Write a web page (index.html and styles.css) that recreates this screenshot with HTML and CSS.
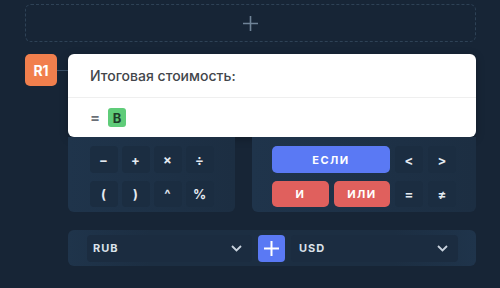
FILE: index.html
```html
<!DOCTYPE html>
<html lang="ru">
<head>
  <meta charset="UTF-8">
  <meta name="viewport" content="width=device-width, initial-scale=1.0">
  <link rel="stylesheet" href="styles.css">
  <title>Формула</title>
</head>
<body>

<div class="add-box">
  <svg width="17" height="17" viewBox="0 0 17 17"><path d="M8.5 1v15M1 8.5h15" stroke="#6f8397" stroke-width="1.6" fill="none"/></svg>
</div>

<div class="formula-row">
  <div class="badge">R1</div>
  <div class="connector"></div>
  <div class="card">
    <div class="card-title">Итоговая стоимость:</div>
    <div class="card-body">
      <span class="eq">=</span>
      <span class="var">B</span>
    </div>
  </div>
</div>

<div class="panels">
  <div class="panel ops">
    <button class="op">&minus;</button>
    <button class="op">+</button>
    <button class="op">&times;</button>
    <button class="op">&divide;</button>
    <button class="op">(</button>
    <button class="op">)</button>
    <button class="op">^</button>
    <button class="op">%</button>
  </div>
  <div class="panel logic">
    <button class="word blue wide">ЕСЛИ</button>
    <button class="op">&lt;</button>
    <button class="op">&gt;</button>
    <button class="word red">И</button>
    <button class="word red">ИЛИ</button>
    <button class="op">=</button>
    <button class="op">&ne;</button>
  </div>
</div>

<div class="currency">
  <div class="select">
    <span>RUB</span>
    <svg width="11" height="7" viewBox="0 0 11 7"><path d="M1 1l4.5 4.5L10 1" stroke="#c9d3de" stroke-width="1.8" fill="none"/></svg>
  </div>
  <button class="add-btn">
    <svg width="15" height="15" viewBox="0 0 15 15"><path d="M7.5 0v15M0 7.5h15" stroke="#fff" stroke-width="2" fill="none"/></svg>
  </button>
  <div class="select">
    <span>USD</span>
    <svg width="11" height="7" viewBox="0 0 11 7"><path d="M1 1l4.5 4.5L10 1" stroke="#c9d3de" stroke-width="1.8" fill="none"/></svg>
  </div>
</div>

</body>
</html>
```

FILE: styles.css
```css
body {
  margin: 0;
  padding: 4px 24px 0 25px;
  background-color: #172536;
  font-family: Inter, "Noto Sans", sans-serif;
}

.add-box {
  display: flex;
  justify-content: center;
  align-items: center;
  height: 36px;
  border: 1px dashed #2e4256;
  border-radius: 6px;
}

.formula-row {
  display: flex;
  align-items: flex-start;
  margin-top: 12px;
}

.badge {
  display: flex;
  justify-content: center;
  align-items: center;
  width: 32px;
  height: 32px;
  border-radius: 5px;
  background-color: #f17f4d;
  color: #fff;
  font-size: 14px;
  font-weight: 700;
}

.connector {
  width: 11px;
  height: 1px;
  margin-top: 16px;
  background-color: #3b5169;
}

.card {
  flex: 1;
  background-color: #fff;
  border-radius: 6px;
  box-shadow: 0 2px 8px rgba(0, 0, 0, 0.25);
}

.card-title {
  height: 43px;
  padding-left: 22px;
  line-height: 43px;
  font-size: 14px;
  font-weight: 500;
  color: #43464b;
  border-bottom: 1px solid #efefef;
}

.card-body {
  display: flex;
  align-items: center;
  gap: 8px;
  height: 39px;
  padding-left: 22px;
}

.eq {
  font-size: 15px;
  font-weight: 600;
  color: #6a6f76;
}

.var {
  display: flex;
  justify-content: center;
  align-items: center;
  width: 18px;
  height: 19px;
  border-radius: 3px;
  background-color: #5fcc79;
  color: #1e3d29;
  font-size: 13px;
  font-weight: 700;
}

.panels {
  display: flex;
  gap: 17px;
  margin-left: 43px;
}

.panel {
  display: grid;
  grid-template-rows: 27px 26px;
  row-gap: 8px;
  justify-content: center;
  height: 75px;
  box-sizing: border-box;
  padding-top: 9px;
  border-radius: 0 0 6px 6px;
  background: linear-gradient(90deg, #1f344b, #1c2e42);
}

.ops {
  width: 167px;
  grid-template-columns: repeat(4, 28px);
  column-gap: 4px;
}

.logic {
  flex: 1;
  grid-template-columns: 57px 56px 28px 28px;
  column-gap: 5px;
}

button {
  border: none;
  padding: 0;
  font-family: inherit;
  cursor: pointer;
}

.op {
  border-radius: 4px;
  background-color: #1b2d41;
  color: #e4eaf1;
  font-size: 13px;
  font-weight: 700;
}

.word {
  border-radius: 5px;
  color: #fff;
  font-size: 11px;
  font-weight: 700;
  letter-spacing: 1.5px;
}

.wide {
  grid-column: span 2;
}

.blue {
  background-color: #5a79f4;
}

.red {
  background-color: #e0605d;
}

.currency {
  display: flex;
  align-items: center;
  gap: 6px;
  height: 36px;
  margin: 18px 0 0 43px;
  padding: 0 18px 0 19px;
  border-radius: 6px;
  background: linear-gradient(90deg, #1f344b, #1c2e42 20%, #1c2e42 80%, #1f344b);
}

.select {
  flex: 1;
  display: flex;
  justify-content: space-between;
  align-items: center;
  height: 27px;
  padding: 0 10px 0 6px;
  border-radius: 4px;
  background-color: #1b2c40;
  color: #dbe2ea;
  font-size: 11px;
  font-weight: 700;
  letter-spacing: 1px;
}

.select + .add-btn + .select {
  padding-left: 8px;
}

.add-btn {
  display: flex;
  justify-content: center;
  align-items: center;
  width: 27px;
  height: 27px;
  border-radius: 4px;
  background-color: #5a79f4;
}
```
